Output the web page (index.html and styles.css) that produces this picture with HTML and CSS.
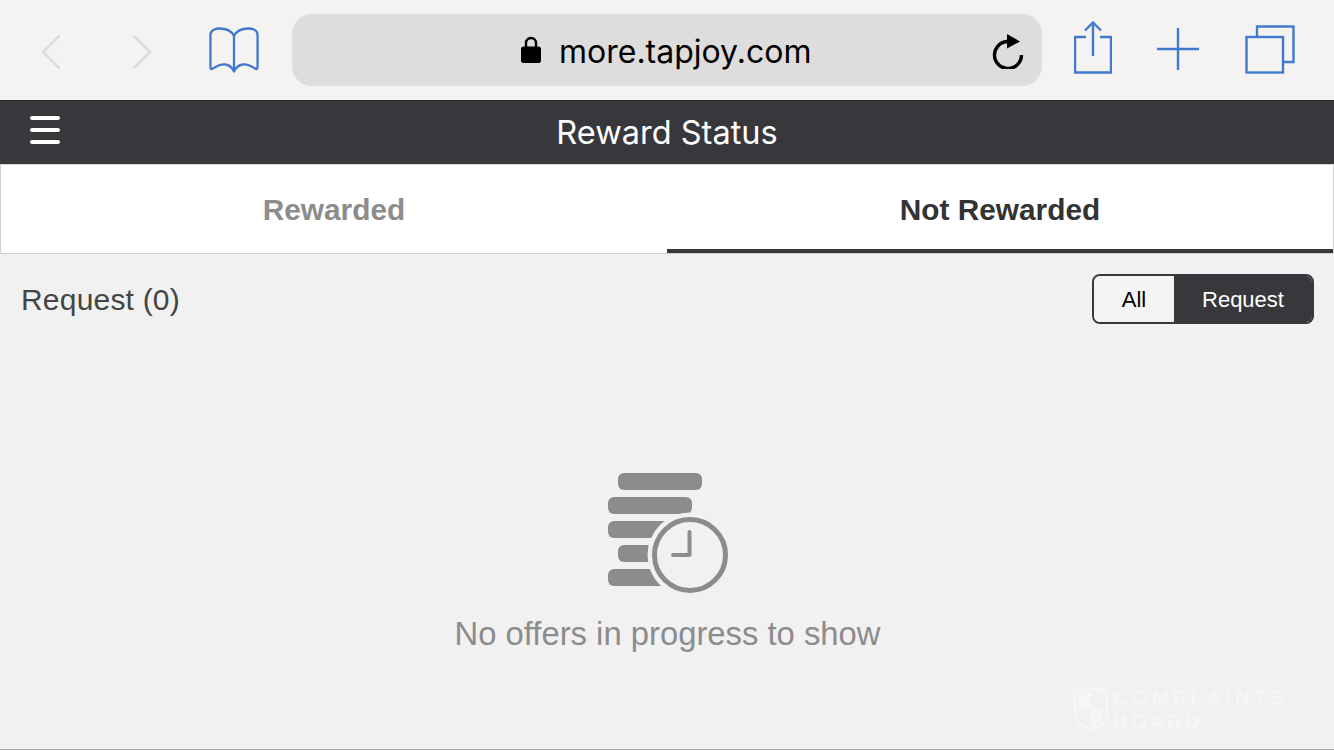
FILE: index.html
```html
<!DOCTYPE html>
<html lang="en">

<head>
    <meta charset="UTF-8">
    <meta name="viewport" content="width=device-width, initial-scale=1.0">
    <title>Reward Status</title>
    <link rel="stylesheet" href="styles.css">
</head>

<body>
    <!-- browser toolbar -->
    <div class="toolbar">
        <svg class="ico-back" width="20" height="36" viewBox="0 0 20 36"><path d="M18.5 1.5 2 18l16.5 16.5" fill="none" stroke="#dcdcdb" stroke-width="2.6"/></svg>
        <svg class="ico-fwd" width="20" height="36" viewBox="0 0 20 36"><path d="M1.5 1.5 18 18 1.5 34.5" fill="none" stroke="#dcdcdb" stroke-width="2.6"/></svg>
        <svg class="ico-book" width="50" height="48" viewBox="0 0 52 48" preserveAspectRatio="none"><path d="M26 9C23 3 17 1.500 11 1.500 7 1.500 2 3 1.500 7.500V40c0 2 1 2.500 2.500 1.500C9 38.500 13 37 17 37.500c4 .5 7 3 9 7 2-4 5-6.500 9-7 4-.5 8 1 13 4 1.500 1 2.500.5 2.500-1.500V7.500C50 3 45 1.500 41 1.500 35 1.500 29 3 26 9Zm0 0v35" fill="none" stroke="#4179cd" stroke-width="2.400" stroke-linejoin="round"/></svg>
        <div class="urlbar">
            <svg class="ico-lock" width="20" height="27" viewBox="0 0 20 27"><path d="M5 12V7a5 5 0 0 1 10 0v5" fill="none" stroke="#000" stroke-width="2.400"/><rect y="10.500" width="20" height="16.500" rx="2.500"/></svg>
            <span class="url">more.tapjoy.com</span>
            <svg class="ico-reload" width="32" height="36" viewBox="0 0 32 36"><path d="M15 8.500a13.500 13.500 0 1 0 14.500 13.500" fill="none" stroke="#000" stroke-width="3.400"/><path d="M15 1l13 7.500L15 15.500Z"/></svg>
        </div>
        <svg class="ico-share" width="38" height="53" viewBox="0 0 38 53"><path d="M12 16H1v35.500h36V16H26M19 35V2M11 9.500 19 1.500l8 8" fill="none" stroke="#4179cd" stroke-width="2.400"/></svg>
        <svg class="ico-plus" width="42" height="42" viewBox="0 0 42 42"><path d="M21 0v42M0 21h42" fill="none" stroke="#4179cd" stroke-width="2.400"/></svg>
        <svg class="ico-tabs" width="50" height="49" viewBox="0 0 50 49"><path d="M12 11V1.500h36.500V37H38" fill="none" stroke="#4179cd" stroke-width="2.400"/><rect x="1.500" y="12" width="36.500" height="35.500" fill="none" stroke="#4179cd" stroke-width="2.400"/></svg>
    </div>

    <div class="topbar">
        <a href="javascript:;" class="menu"><span></span><span></span><span></span></a>
        <div class="topbar-tit">Reward Status</div>
    </div>

    <div class="tabs">
        <div class="tab">Rewarded</div>
        <div class="tab tab-on">Not Rewarded</div>
    </div>

    <div class="content">
        <div class="filter-row">
            <div class="filter-tit">Request (0)</div>
            <div class="seg">
                <div class="seg-all">All</div>
                <div class="seg-req">Request</div>
            </div>
        </div>

        <div class="empty">
            <svg class="ico-empty" width="120" height="121" viewBox="0 0 120 121">
                <rect x="10" y="0" width="84" height="17" rx="6" fill="#8c8c8c"/>
                <rect x="0" y="24" width="84" height="17" rx="6" fill="#8c8c8c"/>
                <rect x="0" y="48" width="84" height="17" rx="6" fill="#8c8c8c"/>
                <rect x="10" y="72" width="60" height="17" rx="6" fill="#8c8c8c"/>
                <rect x="0" y="96" width="70" height="17" rx="6" fill="#8c8c8c"/>
                <circle cx="82" cy="82" r="42.500" fill="#f1f1f2"/>
                <circle cx="82" cy="82" r="35.500" fill="none" stroke="#8c8c8c" stroke-width="5"/>
                <path d="M81.500 59v23H65" fill="none" stroke="#8c8c8c" stroke-width="4" stroke-linecap="round" stroke-linejoin="round"/>
            </svg>
            <div class="empty-txt">No offers in progress to show</div>
        </div>

        <!-- watermark -->
        <div class="mark">
            <svg width="36" height="46" viewBox="0 0 36 46"><path d="M18 2 34 6v22c0 8-8 13-16 16C10 41 2 36 2 28V6Z" fill="none" stroke="#f6f6f6" stroke-width="3"/><path d="M18 6v17H6V8ZM18 23h12v6c0 6-6 9-12 11Z" fill="#f6f6f6"/></svg>
            <div class="mark-txt">
                <div class="mark-big">COMPLAINTS</div>
                <div class="mark-line">
                    <span class="mark-big mark-board">BOARD</span>
                    <span class="mark-small">ALWAYS HAVE<br>A CHOICE</span>
                </div>
            </div>
        </div>
    </div>
</body>

</html>
```

FILE: styles.css
```css
* {
    margin: 0;
    padding: 0;
    box-sizing: border-box;
}

body {
    width: 1334px;
    height: 750px;
    overflow: hidden;
    background: #f1f1f2;
    font-family: "Liberation Sans", Arial, sans-serif;
}

a {
    text-decoration: none;
}

svg {
    display: block;
    flex: none;
}

.toolbar {
    display: flex;
    align-items: flex-start;
    height: 100px;
    padding-left: 41px;
    background: #f4f3f2;
}

.ico-back {
    margin-top: 34px;
}

.ico-fwd {
    margin: 34px 0 0 71px;
}

.ico-book {
    margin: 27px 0 0 57px;
}

.urlbar {
    display: flex;
    align-items: center;
    width: 750px;
    height: 72px;
    margin: 14px 0 0 33px;
    padding-left: 229px;
    background: #dedddb;
    border-radius: 20px;
}

.ico-lock {
    margin-bottom: 1px;
}

.url {
    margin: 2px 0 0 18px;
    font-family: Inter, "Liberation Sans", sans-serif;
    font-size: 32px;
    color: #000;
}

.ico-reload {
    margin: 2px 0 0 auto;
    margin-right: 18px;
}

.ico-share {
    margin: 21px 0 0 32px;
}

.ico-plus {
    margin: 28px 0 0 45px;
}

.ico-tabs {
    margin: 25px 0 0 46px;
}

.topbar {
    position: relative;
    height: 64px;
    background: #38383c;
    border-top: 1px solid #29292c;
    text-align: center;
}

.topbar-tit {
    font-family: Inter, "Liberation Sans", sans-serif;
    font-size: 32.500px;
    line-height: 63px;
    color: #fff;
}

.menu {
    position: absolute;
    left: 30px;
    top: 15px;
    display: flex;
    flex-direction: column;
    gap: 8px;
    width: 30px;
}

.menu span {
    height: 4px;
    background: #fff;
    border-radius: 2px;
}

.tabs {
    display: flex;
    height: 90px;
    background: #fff;
    border: 1px solid #cfcfcf;
    border-top-color: #d8d8d8;
}

.tab {
    flex: 1;
    text-align: center;
    font-size: 29.800px;
    font-weight: bold;
    line-height: 90px;
    color: #8c8c8c;
}

.tab-on {
    height: 88px;
    color: #333;
    border-bottom: 4px solid #38383c;
}

.content {
    position: relative;
    height: 496px;
    padding: 20px 20px 0 21px;
    border-bottom: 1px solid #a9a9a9;
}

.filter-row {
    display: flex;
    justify-content: space-between;
    align-items: center;
}

.filter-tit {
    padding-top: 1px;
    font-size: 30px;
    letter-spacing: 0.200px;
    color: #444;
}

.seg {
    display: flex;
    width: 222px;
    height: 50px;
    border: 2px solid #38383c;
    border-radius: 8px;
    overflow: hidden;
    font-size: 22px;
    line-height: 47px;
    text-align: center;
}

.seg-all {
    width: 80px;
    color: #000;
    background: #f4f4f4;
}

.seg-req {
    flex: 1;
    color: #fff;
    background: #38383c;
}

.empty {
    display: flex;
    flex-direction: column;
    align-items: center;
    padding-top: 149px;
}

.ico-empty {
    margin-left: 1px;
}

.empty-txt {
    margin-top: 20px;
    font-size: 32.800px;
    line-height: 40px;
    color: #8c8c8c;
}

.mark {
    position: absolute;
    left: 1073px;
    top: 432px;
    display: flex;
    gap: 4px;
    color: #f6f6f6;
}

.mark-big {
    font-size: 21px;
    font-weight: bold;
    line-height: 24px;
    letter-spacing: 3.600px;
}

.mark-board {
    letter-spacing: 2.500px;
}

.mark-line {
    display: flex;
    align-items: center;
    gap: 6px;
}

.mark-small {
    font-size: 8px;
    line-height: 10px;
    letter-spacing: 1px;
}
```
